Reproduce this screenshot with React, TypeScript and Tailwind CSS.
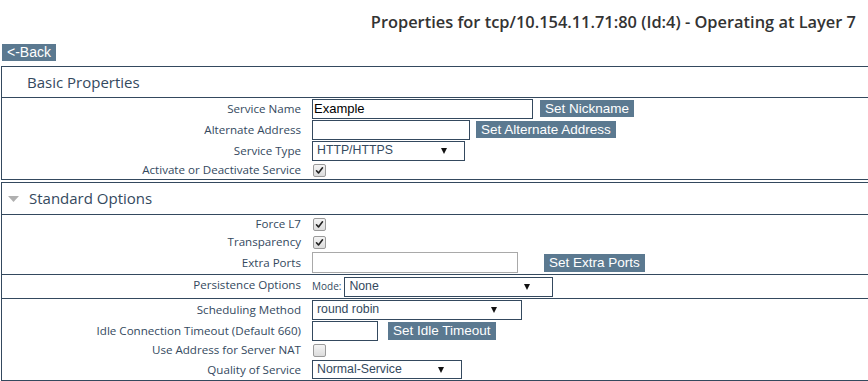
import React from "react";

const BORDER = "border-[#34495e]";

function Label({ children, top = false }: { children: React.ReactNode; top?: boolean }) {
  return (
    <div
      className={`w-[299px] shrink-0 text-right text-[11.6px] leading-[14px] text-[#34495e] ${top ? "self-start pt-[3px]" : ""}`}
      style={{ fontFamily: '"Open Sans", sans-serif' }}
    >
      {children}
    </div>
  );
}

function Row({ h, children, border = false }: { h: string; children: React.ReactNode; border?: boolean }) {
  return (
    <div className={`flex items-center ${h} ${border ? `border-b ${BORDER}` : ""}`}>{children}</div>
  );
}

function Controls({ children }: { children: React.ReactNode }) {
  return <div className="ml-[11px] flex items-center">{children}</div>;
}

function Btn({ children, className = "" }: { children: React.ReactNode; className?: string }) {
  return (
    <div
      className={`flex items-center bg-[#5b7990] px-[5px] text-[13.5px] leading-none text-white ${className}`}
      style={{ fontFamily: '"Liberation Sans", Arial, sans-serif' }}
    >
      {children}
    </div>
  );
}

function TextBox({ w, h = "h-[20px]", value = "", light = false }: { w: string; h?: string; value?: string; light?: boolean }) {
  return (
    <div
      className={`${w} ${h} flex items-center border ${light ? "border-[#a9a9a9]" : "border-[#34495e]"} bg-white pl-[1px] text-[13px] text-[#000]`}
      style={{ fontFamily: '"Liberation Sans", Arial, sans-serif' }}
    >
      {value}
    </div>
  );
}

function Select({ w, h = "h-[20px]", value, arrowRight = "pr-[17px]" }: { w: string; h?: string; value: string; arrowRight?: string }) {
  return (
    <div
      className={`${w} ${h} flex items-center justify-between border border-[#34495e] bg-white pl-[4px] ${arrowRight} text-[12.3px] text-[#34495e]`}
      style={{ fontFamily: '"Liberation Sans", Arial, sans-serif' }}
    >
      <span>{value}</span>
      <svg width="6" height="7" viewBox="0 0 6 7">
        <path d="M0 1 L6 1 L3 7 Z" fill="#111" />
      </svg>
    </div>
  );
}

function Check({ checked }: { checked: boolean }) {
  return (
    <div className="ml-[1px] flex h-[13px] w-[13px] items-center justify-center rounded-[2px] border border-[#9a9a9a] bg-gradient-to-b from-[#f4f4f4] to-[#dcdcdc]">
      {checked && (
        <svg width="9" height="9" viewBox="0 0 9 9">
          <path d="M1.5 4.8 L3.5 7 L7.5 1.8" stroke="#222" strokeWidth="1.6" fill="none" strokeLinecap="round" strokeLinejoin="round" />
        </svg>
      )}
    </div>
  );
}

export default function App() {
  const sans = { fontFamily: '"Open Sans", sans-serif' };
  return (
    <div className="h-[381px] w-[868px] overflow-hidden bg-white">
      <div className="flex h-[44px] items-center justify-end pr-[12px]">
        <div className="text-[16.4px] font-semibold text-[#333]" style={sans}>
          Properties for tcp/10.154.11.71:80 (Id:4) - Operating at Layer 7
        </div>
      </div>
      <div
        className="ml-[2px] flex h-[17px] w-[54px] items-center justify-center bg-[#5b7990] text-[14px] text-white"
        style={{ fontFamily: '"Liberation Sans", Arial, sans-serif' }}
      >
        &lt;-Back
      </div>

      {/* Basic Properties */}
      <div className={`ml-[1px] mt-[5px] border-b border-l border-t ${BORDER}`}>
        <div className={`flex h-[31px] items-center border-b ${BORDER} pl-[25px] text-[15px] text-[#34495e]`} style={sans}>
          Basic Properties
        </div>
        <Row h="h-[21px]">
          <Label>Service Name</Label>
          <Controls>
            <TextBox w="w-[221px]" value="Example" />
            <Btn className="ml-[7px] h-[17px]">Set Nickname</Btn>
          </Controls>
        </Row>
        <Row h="h-[21px]">
          <Label>Alternate Address</Label>
          <Controls>
            <TextBox w="w-[158px]" />
            <Btn className="ml-[6px] h-[17px]">Set Alternate Address</Btn>
          </Controls>
        </Row>
        <Row h="h-[21px]">
          <Label>Service Type</Label>
          <Controls>
            <Select w="w-[153px]" value="HTTP/HTTPS" />
          </Controls>
        </Row>
        <Row h="h-[18px]">
          <Label>Activate or Deactivate Service</Label>
          <Controls>
            <Check checked />
          </Controls>
        </Row>
      </div>

      {/* Standard Options */}
      <div className={`ml-[1px] mt-[2px] border-b border-l border-t ${BORDER}`}>
        <div className={`flex h-[32px] items-center border-b ${BORDER} pl-[6px] text-[15px] text-[#34495e]`} style={sans}>
          <svg width="11" height="6" viewBox="0 0 11 6" className="mr-[10px]">
            <path d="M0 0 L11 0 L5.5 6 Z" fill="#b0b0b0" />
          </svg>
          Standard Options
        </div>
        <Row h="h-[18px]">
          <Label>Force L7</Label>
          <Controls>
            <Check checked />
          </Controls>
        </Row>
        <Row h="h-[18px]">
          <Label>Transparency</Label>
          <Controls>
            <Check checked />
          </Controls>
        </Row>
        <Row h="h-[24px]" border>
          <Label>Extra Ports</Label>
          <Controls>
            <TextBox w="w-[206px]" h="h-[21px]" light />
            <Btn className="ml-[26px] h-[18px]">Set Extra Ports</Btn>
          </Controls>
        </Row>
        <Row h="h-[24px]" border>
          <Label top>Persistence Options</Label>
          <Controls>
            <span className="mr-[3px] text-[10px] text-[#34495e]" style={sans}>
              Mode:
            </span>
            <Select w="w-[209px]" value="None" arrowRight="pr-[22px]" />
          </Controls>
        </Row>
        <Row h="h-[21px]">
          <Label>Scheduling Method</Label>
          <Controls>
            <Select w="w-[210px]" value="round robin" arrowRight="pr-[24px]" />
          </Controls>
        </Row>
        <Row h="h-[21px]">
          <Label>Idle Connection Timeout (Default 660)</Label>
          <Controls>
            <TextBox w="w-[66px]" />
            <Btn className="ml-[10px] h-[18px]">Set Idle Timeout</Btn>
          </Controls>
        </Row>
        <Row h="h-[18px]">
          <Label>Use Address for Server NAT</Label>
          <Controls>
            <Check checked={false} />
          </Controls>
        </Row>
        <Row h="h-[21px]">
          <Label>Quality of Service</Label>
          <Controls>
            <Select w="w-[150px]" h="h-[19px]" value="Normal-Service" />
          </Controls>
        </Row>
      </div>
    </div>
  );
}
